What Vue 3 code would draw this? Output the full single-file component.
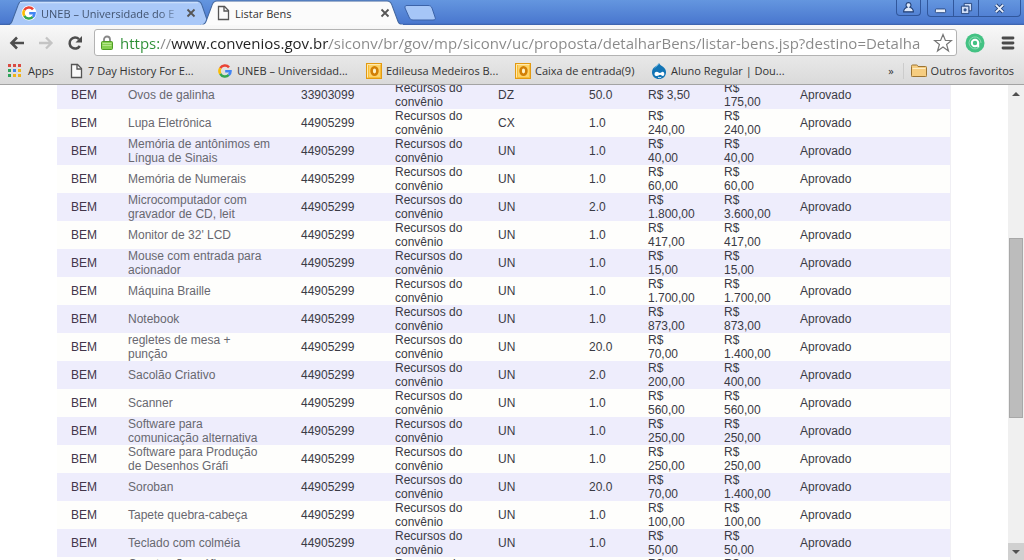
<script setup>
import { ref } from 'vue'

const url = ref('https://www.convenios.gov.br/siconv/br/gov/mp/siconv/uc/proposta/detalharBens/listar-bens.jsp?destino=Detalha')

const bookmarks = [
  { icon: 'apps', label: 'Apps', size: 'w-apps' },
  { icon: 'page', label: '7 Day History For E...', size: 'w-wide' },
  { icon: 'google', label: 'UNEB – Universidad...', size: 'w-wide' },
  { icon: 'outlook', label: 'Edileusa Medeiros B...', size: 'w-wide' },
  { icon: 'outlook', label: 'Caixa de entrada(9)', size: 'w-mid' },
  { icon: 'drupal', label: 'Aluno Regular | Dou...', size: 'w-wide' },
]

const item = (name, unit, qty, price, total, code = '44905299') => ({ name, unit, qty, price, total, code })

const rows = [
  item('Ovos de galinha', 'DZ', '50.0', 'R$ 3,50', 'R$\n175,00', '33903099'),
  item('Lupa Eletrônica', 'CX', '1.0', 'R$\n240,00', 'R$\n240,00'),
  item('Memória de antônimos em\nLíngua de Sinais', 'UN', '1.0', 'R$\n40,00', 'R$\n40,00'),
  item('Memória de Numerais', 'UN', '1.0', 'R$\n60,00', 'R$\n60,00'),
  item('Microcomputador com\ngravador de CD, leit', 'UN', '2.0', 'R$\n1.800,00', 'R$\n3.600,00'),
  item("Monitor de 32' LCD", 'UN', '1.0', 'R$\n417,00', 'R$\n417,00'),
  item('Mouse com entrada para\nacionador', 'UN', '1.0', 'R$\n15,00', 'R$\n15,00'),
  item('Máquina Braille', 'UN', '1.0', 'R$\n1.700,00', 'R$\n1.700,00'),
  item('Notebook', 'UN', '1.0', 'R$\n873,00', 'R$\n873,00'),
  item('regletes de mesa +\npunção', 'UN', '20.0', 'R$\n70,00', 'R$\n1.400,00'),
  item('Sacolão Criativo', 'UN', '2.0', 'R$\n200,00', 'R$\n400,00'),
  item('Scanner', 'UN', '1.0', 'R$\n560,00', 'R$\n560,00'),
  item('Software para\ncomunicação alternativa', 'UN', '1.0', 'R$\n250,00', 'R$\n250,00'),
  item('Software para Produção\nde Desenhos Gráfi', 'UN', '1.0', 'R$\n250,00', 'R$\n250,00'),
  item('Soroban', 'UN', '20.0', 'R$\n70,00', 'R$\n1.400,00'),
  item('Tapete quebra-cabeça', 'UN', '1.0', 'R$\n100,00', 'R$\n100,00'),
  item('Teclado com colméia', 'UN', '1.0', 'R$\n50,00', 'R$\n50,00'),
  item('Construção gráfica\ncom mesa', 'UN', '1.0', 'R$\n50,00', 'R$\n50,00'),
]
</script>

<template>
  <div class="browser">
    <svg class="defs" aria-hidden="true">
      <symbol id="i-google" viewBox="0 0 16 16">
        <g fill="none" stroke-width="2.6">
          <path d="M3.3 5.2A5.4 5.4 0 0 1 12 4.3" stroke="#ea4335" />
          <path d="M3.3 5.2a5.4 5.4 0 0 0 0 5.6" stroke="#fbbc05" />
          <path d="M3.3 10.8a5.4 5.4 0 0 0 8.5 1.1" stroke="#34a853" />
          <path d="M8.2 8.2h5.3c0 1.6-.6 2.8-1.7 3.7" stroke="#4285f4" />
        </g>
      </symbol>
      <symbol id="i-google-disc" viewBox="0 0 16 16">
        <circle cx="8" cy="8" r="7.500" fill="#fff" />
        <use href="#i-google" />
      </symbol>
      <symbol id="i-page" viewBox="0 0 16 16">
        <path d="M3.500 1.500h6l4 4v9h-10z" fill="#fafafa" stroke="#555" stroke-width="1.300" />
        <path d="M9 1.500v4.500h4.500" fill="none" stroke="#555" stroke-width="1.300" />
      </symbol>
      <symbol id="i-apps" viewBox="0 0 16 16">
        <path d="M0 1h3v3H0z M5 1h3v3H5z M10 1h3v3h-3z" fill="#d94b43" />
        <path d="M0 6h3v3H0z" fill="#2fa35a" />
        <path d="M5 6h3v3H5z" fill="#4284e8" />
        <path d="M10 6h3v3h-3z" fill="#efb31c" />
        <path d="M0 11h3v3H0z" fill="#2fa35a" />
        <path d="M5 11h3v3H5z M10 11h3v3h-3z" fill="#efb31c" />
      </symbol>
      <symbol id="i-outlook" viewBox="0 0 16 16">
        <rect x="0.500" y="0.500" width="15" height="15" fill="#f9bd35" stroke="#e29a12" />
        <path d="M1.500 14.500V1.500h13" fill="none" stroke="#ffe9ae" />
        <rect x="3" y="2" width="11" height="12" fill="#fdd368" />
        <ellipse cx="8.500" cy="8" rx="2.900" ry="3.700" fill="#fff2c4" stroke="#d27f05" stroke-width="2.600" />
      </symbol>
      <symbol id="i-drupal" viewBox="0 0 16 16">
        <path d="M8 0c.8 2 2.500 2.500 4 3.700 2 1.500 3 3.300 3 5.500 0 4-3.200 6.800-7 6.800s-7-2.800-7-6.800c0-2.400 1.200-4.200 3-5.500C5.700 2.600 7.400 1.800 8 0z" fill="#1274b5" />
        <path d="M7.500.8c-.3 2-2.500 2.700-4 4.200" fill="none" stroke="#5fb0dd" />
        <path d="M3.500 11.200c0-1.600 1.100-2.400 2.300-2.400 1.500 0 2.200 1.300 3.100 1.300s1.600-1.300 2.700-1.300c1.200 0 1.700 1 1.700 2.100 0 1.200-.6 2-1.500 2-1.100 0-1.700-1.200-2.700-1.200s-1.900 1.300-3.300 1.300c-1.300 0-2.300-.6-2.300-1.800z" fill="#fff" />
        <path d="M7 14.200c1 .6 2.200.6 3.200 0" fill="none" stroke="#fff" />
      </symbol>
      <symbol id="i-close" viewBox="0 0 10 10">
        <path d="M1.500 1.500l7 7M8.500 1.500l-7 7" stroke="currentColor" stroke-width="1.800" />
      </symbol>
    </svg>

    <header class="titlebar">
      <div class="tab back">
        <svg class="shape" viewBox="0 0 204 24" preserveAspectRatio="none" aria-hidden="true">
          <path d="M0 24.500C5 24 6 21 7 18l5-13c1-3 2-4 5-4h174c3 0 4 1 5 4l7 19.500z" fill="#a9c8f8" stroke="#42679f" />
          <path d="M14 2.500h178" stroke="#c9defc" />
        </svg>
        <svg class="ico"><use href="#i-google-disc" /></svg>
        <button class="title faded">UNEB – Universidade do E</button>
        <button class="close" aria-label="Fechar UNEB"><svg><use href="#i-close" /></svg></button>
      </div>
      <div class="tab front">
        <svg class="shape" viewBox="0 0 204 24" preserveAspectRatio="none" aria-hidden="true">
          <path d="M0 24.500C5 24 6 21 7 18l5-13c1-3 2-4 5-4h170c3 0 4 1 5 4l5 13c1 3 2 6 7 6.500z" fill="#fbfbfb" stroke="#42679f" />
          <path d="M1 24h202" stroke="#fbfbfb" />
        </svg>
        <svg class="ico"><use href="#i-page" /></svg>
        <button class="title">Listar Bens</button>
        <button class="close" aria-label="Fechar Listar Bens"><svg><use href="#i-close" /></svg></button>
      </div>
      <button class="newtab" aria-label="Nova guia">
        <svg viewBox="0 0 32 16"><path d="M1 3c0-2 0-2.500 2-2.500h21c2 0 3 .5 4 2.500l3 9c1 2 0 3-2 3H9c-2 0-3-1-4-3z" fill="#a6c6f7" stroke="#3c63a8" /></svg>
      </button>
      <div class="controls">
        <button class="user" aria-label="Usuário">
          <svg viewBox="0 0 12 12"><path d="M6 1.500a2.300 2.300 0 0 1 1.300 4.200C9 6.300 10.500 7.500 10.500 10h-9c0-2.500 1.500-3.700 3.200-4.300A2.300 2.300 0 0 1 6 1.500z" fill="#dfe9fa" stroke="#1f3d73" /></svg>
        </button>
        <div class="group">
          <button aria-label="Minimizar"><svg viewBox="0 0 14 14"><rect x="1.500" y="7.500" width="11" height="4" rx="1" fill="#e8effb" stroke="#26457c" /></svg></button>
          <button aria-label="Restaurar">
            <svg viewBox="0 0 14 14" fill="#cfdef7" stroke="#26457c"><path d="M4.500 1.500h8v8h-3v-5h-5z" /><path d="M1.500 4.500h8v8h-8z" /><path d="M4.500 7.500h2v2h-2z" fill="#4b78c9" /></svg>
          </button>
          <button class="last" aria-label="Fechar janela">
            <svg viewBox="0 0 14 14"><path d="M3 3l8 8M11 3l-8 8" stroke="#26457c" stroke-width="4" /><path d="M3 3l8 8M11 3l-8 8" stroke="#e8effb" stroke-width="2" /></svg>
          </button>
        </div>
      </div>
    </header>

    <div class="chrome">
      <nav class="toolbar">
        <button aria-label="Voltar"><svg viewBox="0 0 16 16"><path d="M15 8H3M8 2.500L2.500 8 8 13.500" fill="none" stroke="#4d4d4d" stroke-width="2.600" /></svg></button>
        <button aria-label="Avançar"><svg viewBox="0 0 16 16"><path d="M1 8h12M8 2.500L13.500 8 8 13.500" fill="none" stroke="#c4c4c4" stroke-width="2.300" /></svg></button>
        <button aria-label="Recarregar"><svg viewBox="0 0 16 16"><path d="M12.800 11A5.500 5.500 0 1 1 12 4.200" fill="none" stroke="#4d4d4d" stroke-width="2.500" /><path d="M15 1v6.500H8.500z" fill="#4d4d4d" /></svg></button>
        <div class="omnibox">
          <svg class="lock" viewBox="0 0 12 16" aria-hidden="true">
            <path d="M3 8V4.500a3 3 0 0 1 6 0V8" fill="none" stroke="#888" stroke-width="1.800" />
            <rect x="0.500" y="6.500" width="11" height="8" rx="1" fill="#86cf50" stroke="#4f9c25" />
            <path d="M1.500 8.500h9M1.500 10.500h9" stroke="#b4e58c" />
          </svg>
          <input v-model="url" class="url" type="text" aria-label="Endereço" spellcheck="false" />
          <button class="star" aria-label="Favoritar"><svg viewBox="0 0 20 20"><path d="M10 1.500l2.400 6h6.100l-4.900 4 1.900 6.500-5.500-3.900L4.500 18l1.900-6.500-4.900-4h6.100z" fill="#fff" stroke="#777" stroke-width="1.200" /></svg></button>
        </div>
        <button class="ext" aria-label="Extensão"><svg viewBox="0 0 20 20"><circle cx="10" cy="10" r="9.500" fill="#43c283" /><circle cx="10" cy="10" r="3.200" fill="none" stroke="#fff" stroke-width="2" /><path d="M13.200 9.500v5" stroke="#fff" stroke-width="2" /><path d="M13.500 14.800A6 6 0 1 1 16 10" fill="none" stroke="#8bdcb2" stroke-width="1" /></svg></button>
        <button class="menu" aria-label="Menu"><svg viewBox="0 0 14 14"><path d="M2 2h10M2 7h10M2 12h10" stroke="#4a4a4a" stroke-width="2.800" stroke-linecap="round" /></svg></button>
      </nav>
      <nav class="bookmarks">
        <a v-for="b in bookmarks" :key="b.label" href="#" :class="b.size">
          <svg class="ico" aria-hidden="true"><use :href="'#i-' + b.icon" /></svg>{{ b.label }}
        </a>
        <button class="more" aria-label="Mais favoritos">»</button>
        <a href="#" class="others">
          <svg class="ico" viewBox="0 0 16 16" aria-hidden="true">
            <path d="M.5 3.500c0-1 0-1.500 1-1.500h4c1 0 1 .5 1.500 1.500h7.500c1 0 1 .5 1 1v8c0 1 0 1-1 1h-13c-1 0-1 0-1-1z" fill="#f6cd80" stroke="#9c7433" />
            <path d="M1.500 5.500h13" stroke="#fdecc4" />
          </svg>Outros favoritos
        </a>
      </nav>
    </div>

    <main class="viewport">
      <div class="page">
        <table>
          <colgroup>
            <col class="c1" /><col class="c2" /><col class="c3" /><col class="c4" /><col class="c5" /><col class="c6" /><col class="c7" /><col class="c7" /><col />
          </colgroup>
          <tbody>
            <tr v-for="r in rows" :key="r.name">
              <td class="kind">BEM</td>
              <td class="name">{{ r.name }}</td>
              <td>{{ r.code }}</td>
              <td>{{ 'Recursos do\nconvênio' }}</td>
              <td>{{ r.unit }}</td>
              <td>{{ r.qty }}</td>
              <td>{{ r.price }}</td>
              <td>{{ r.total }}</td>
              <td>Aprovado</td>
            </tr>
          </tbody>
        </table>
      </div>
      <div class="scrollbar">
        <button aria-label="Rolar para cima"><svg viewBox="0 0 8 4"><path d="M0 4l4-4 4 4z" fill="#505050" /></svg></button>
        <div class="track"><div class="thumb"></div></div>
        <button class="down" aria-label="Rolar para baixo"><svg viewBox="0 0 8 4"><path d="M0 0l4 4 4-4z" fill="#505050" /></svg></button>
      </div>
    </main>
  </div>
</template>

<style>
body {
  margin: 0;
  overflow: hidden;
}
</style>

<style scoped>
.browser {
  height: 100vh;
  display: flex;
  flex-direction: column;
  overflow: hidden;
  font-family: "Open Sans", "Noto Sans", sans-serif;
  font-size: 11px;
  color: #333;
}
.defs {
  position: absolute;
  width: 0;
  height: 0;
}
svg {
  display: block;
}
button {
  border: 0;
  padding: 0;
  background: none;
  font: inherit;
  color: inherit;
  display: flex;
  align-items: center;
  justify-content: center;
}
.ico {
  width: 16px;
  height: 16px;
  flex: none;
}
.titlebar {
  height: 25px;
  flex: none;
  display: flex;
  padding-left: 6px;
  background: linear-gradient(#6496df, #4a78cf 92%, #3a5fa8);
}
.tab {
  position: relative;
  width: 204px;
  height: 25px;
  box-sizing: border-box;
  padding: 1px 13px 0 15px;
  display: flex;
  align-items: center;
}
.front {
  margin-left: -10px;
  z-index: 1;
}
.shape {
  position: absolute;
  inset: 0;
  width: 100%;
  height: 100%;
  z-index: -1;
}
.back {
  z-index: 0;
  color: #41536f;
}
.title {
  flex: 1;
  justify-content: flex-start;
  margin-left: 4px;
  white-space: nowrap;
  overflow: hidden;
}
.faded {
  mask-image: linear-gradient(90deg, #000 82%, transparent);
}
.close {
  width: 12px;
  height: 16px;
  color: #555;
}
.close svg {
  width: 10px;
  height: 10px;
}
.newtab {
  width: 32px;
  height: 16px;
  margin-top: 5px;
}
.newtab svg {
  width: 32px;
  height: 16px;
}
.controls {
  margin-left: auto;
  padding-right: 3px;
  display: flex;
  gap: 6px;
}
.controls button {
  width: 25px;
  height: 16px;
}
.controls svg {
  width: 13px;
  height: 13px;
}
.controls .user {
  border: 1px solid #31579c;
  border-top: 0;
  border-radius: 0 0 4px 4px;
}
.group {
  height: 16px;
  display: flex;
  border: 1px solid #31579c;
  border-top: 0;
  border-radius: 0 0 4px 4px;
}
.group button + button {
  border-left: 1px solid #31579c;
}
.controls .last {
  width: 42px;
}
.chrome {
  flex: none;
  background: linear-gradient(#f8f8f8, #e6e6e6 60%, #dadada);
  border-bottom: 1px solid #a3a3a3;
}
.toolbar {
  height: 32px;
  box-sizing: border-box;
  display: flex;
  align-items: center;
  padding: 3px 9px 0;
}
.toolbar > button {
  width: 16px;
  height: 24px;
  margin-right: 13px;
}
.toolbar > button svg {
  width: 16px;
  height: 16px;
}
.omnibox {
  flex: 1;
  min-width: 0;
  height: 25px;
  margin-left: -2px;
  border: 1px solid #b3b3b3;
  border-radius: 3px;
  background: #fff;
  display: flex;
  align-items: center;
  padding: 0 3px 0 6px;
}
.lock {
  width: 12px;
  height: 16px;
  flex: none;
}
.url {
  flex: 1;
  min-width: 0;
  height: 24px;
  margin-left: 7px;
  padding: 0;
  border: 0;
  outline: 0;
  font: 15px "Open Sans", "Noto Sans", sans-serif;
  color: transparent;
  background: linear-gradient(90deg, #2c8f35 39px, #888 39px 51px, #222 51px 209px, #888 209px);
  background-clip: text;
}
.star svg {
  width: 20px;
  height: 20px;
}
.toolbar .ext {
  width: 20px;
  margin: 0 16px 0 8px;
}
.toolbar .ext svg {
  width: 20px;
  height: 20px;
}
.toolbar .menu {
  width: 14px;
  margin: 0;
}
.toolbar .menu svg {
  width: 14px;
  height: 14px;
}
.bookmarks {
  height: 27px;
  display: flex;
  align-items: center;
  padding: 0 8px;
}
.bookmarks a {
  display: flex;
  align-items: center;
  gap: 4px;
  color: #333;
  text-decoration: none;
  white-space: nowrap;
}
.w-apps {
  width: 60px;
}
.w-wide {
  width: 149px;
}
.w-mid {
  width: 136px;
}
.more {
  margin-left: auto;
  padding: 0 9px 0 4px;
}
.bookmarks .others {
  border-left: 1px solid #ccc;
  padding: 0 2px 0 7px;
}
.viewport {
  flex: 1;
  min-height: 0;
  display: flex;
  background: #fff;
}
.page {
  flex: 1;
  overflow: hidden;
  padding: 0 57px;
}
table {
  width: 100%;
  margin-top: -4px;
  table-layout: fixed;
  border-collapse: collapse;
  font: 12px/14px "Liberation Sans", Arial, sans-serif;
  color: #3a3a44;
}
.c1 { width: 57px; }
.c2 { width: 173px; }
.c3 { width: 94px; }
.c4 { width: 103px; }
.c5 { width: 91px; }
.c6 { width: 59px; }
.c7 { width: 76px; }
td {
  height: 28px;
  padding: 0 0 0 14px;
  vertical-align: middle;
  white-space: pre;
}
tr {
  background: #fefefc;
}
tr:nth-child(odd) {
  background: #eeedfc;
}
td:last-child {
  border-right: 1px solid #f0eff4;
}
.kind {
  color: #43364a;
}
.name {
  color: #686870;
}
.scrollbar {
  width: 16px;
  flex: none;
  display: flex;
  flex-direction: column;
  background: #f0f0f0;
}
.scrollbar button {
  height: 17px;
  flex: none;
}
.scrollbar button svg {
  width: 8px;
  height: 4px;
}
.scrollbar .down {
  background: #d0d0d0;
}
.track {
  flex: 1;
  display: flex;
  flex-direction: column;
  padding: 136px 1px 0;
}
.thumb {
  height: 180px;
  box-sizing: border-box;
  border: 1px solid #a8a8a8;
  background: #bcbcbc;
}
</style>
